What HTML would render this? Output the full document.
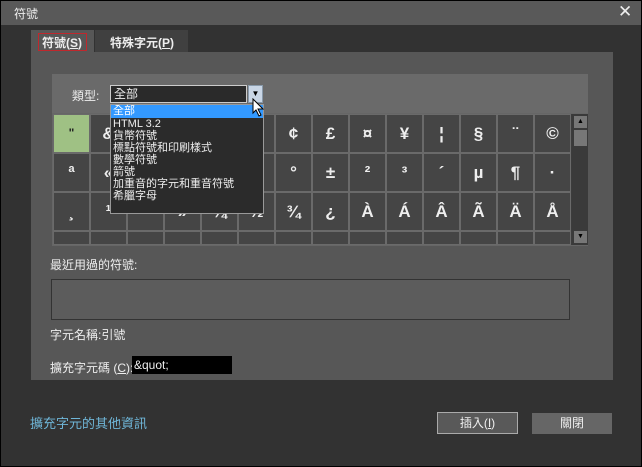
<!DOCTYPE html><html><head><meta charset="utf-8"><style>
*{margin:0;padding:0;box-sizing:border-box}
body{width:642px;height:467px;background:#000;font-family:"Liberation Sans","Noto Sans CJK TC",sans-serif;color:#eee;font-size:12px;position:relative;overflow:hidden}
.a{position:absolute}
#win{left:1px;top:1px;width:640px;height:465px;background:#323232}
#title{left:0;top:0;width:640px;height:24px;background:#595959}
.cell{position:absolute;width:37px;height:39px;border:1px solid #6a6a6a;background:#454545;color:#eee;font-size:17px;text-align:center;line-height:37px;font-weight:bold}
</style></head><body>
<div id="win" class="a">
<div id="title" class="a"></div>
</div>
<div class="a" style="left:14px;top:5px;font-size:12px;color:#eee">符號</div>
<div class="a" style="left:618px;top:2px;font-size:17px;color:#eee">✕</div>
<div class="a" style="left:95px;top:30px;width:93px;height:22px;background:#404040"></div>
<div class="a" style="left:110px;top:34px;font-size:12px;font-weight:bold">特殊字元(<u>P</u>)</div>
<div class="a" style="left:31px;top:30px;width:63px;height:24px;background:#575757"></div>
<div class="a" style="left:38px;top:33px;width:49px;height:18px;border:1px solid #c0282d"></div>
<div class="a" style="left:42px;top:34px;font-size:12px;font-weight:bold">符號(<u>S</u>)</div>
<div class="a" style="left:31px;top:52px;width:582px;height:328px;background:#575757"></div>
<div class="a" style="left:52px;top:74px;width:536px;height:41px;background:#6a6a6a"></div>
<div class="a" style="left:52px;top:113px;width:536px;height:133px;background:#3c3c3c;border:1px solid #666"></div>
<div id="grid"></div>
<div class="a" style="left:572px;top:114px;width:16px;height:131px;background:#3a3a3a"></div>
<div class="a" style="left:574px;top:116px;width:13px;height:12px;background:#777;font-size:7px;text-align:center;line-height:12px;color:#000">▲</div>
<div class="a" style="left:574px;top:130px;width:13px;height:16px;background:#777"></div>
<div class="a" style="left:574px;top:231px;width:13px;height:12px;background:#777;font-size:7px;text-align:center;line-height:12px;color:#000">▼</div>
<div class="a" style="left:72px;top:87px">類型:</div>
<div class="a" style="left:110px;top:85px;width:137px;height:18px;border:1px solid #ccc;background:#2a2a2a;padding-left:3px;line-height:16px">全部</div>
<div class="a" style="left:248px;top:85px;width:15px;height:18px;background:#c9d6e6;border:1px solid #89a;font-size:8px;text-align:center;line-height:16px;color:#000">▼</div>
<div class="a" style="left:110px;top:104px;width:154px;height:110px;background:#2b2b2b;border:1px solid #999;font-size:11px;line-height:12px">
<div style="background:#3399ff;color:#fff;padding-left:2px;height:13px">全部</div>
<div style="padding-left:2px">HTML 3.2<br>貨幣符號<br>標點符號和印刷樣式<br>數學符號<br>箭號<br>加重音的字元和重音符號<br>希臘字母</div></div>
<svg class="a" style="left:252px;top:98px" width="14" height="20"><path d="M1 1 L1 15 L4 12 L7 18 L9 17 L6 11 L11 11 Z" fill="#fff" stroke="#000"/></svg>
<div class="a" style="left:50px;top:256px">最近用過的符號:</div>
<div class="a" style="left:51px;top:279px;width:519px;height:41px;background:#5c5c5c;border:1px solid #333"></div>
<div class="a" style="left:50px;top:326px">字元名稱:引號</div>
<div class="a" style="left:50px;top:359px">擴充字元碼 (<u>C</u>):</div>
<div class="a" style="left:132px;top:356px;width:100px;height:18px;background:#000;padding-left:2px;line-height:18px">&amp;quot;</div>
<div class="a" style="left:30px;top:413px;color:#6fb6d8;font-size:13px">擴充字元的其他資訊</div>
<div class="a" style="left:437px;top:412px;width:81px;height:22px;border:1px solid #aaa;background:#595959;text-align:center;line-height:20px">插入(<u>I</u>)</div>
<div class="a" style="left:532px;top:413px;width:80px;height:21px;background:#666;text-align:center;line-height:21px">關閉</div>
<script>
var rows=['"&<>\u00a0¡¢£¤¥¦§¨©','ª«¬­®¯°±²³´µ¶·','¸¹º»¼½¾¿ÀÁÂÃÄÅ','              '];
var ys=[114,153,192,231];var h='';
for(var r=0;r<4;r++)for(var c=0;c<14;c++){var ch=rows[r][c]||'';var bg=(r==0&&c==0)?'background:#9fc184;color:#222;':'';
var fs=(r==0&&c==0)?'font-size:12px;':'';
h+='<div class="cell" style="left:'+(53+c*37)+'px;top:'+ys[r]+'px;'+(r==3?'height:14px;':'')+bg+fs+'">'+(r==3?'':ch.replace('&','&amp;').replace('<','&lt;').replace('>','&gt;'))+'</div>';}
document.getElementById('grid').outerHTML=h;
</script>
</body></html>
